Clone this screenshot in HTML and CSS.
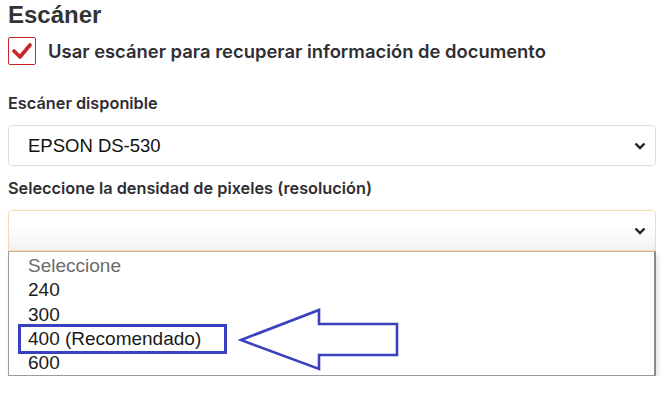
FILE: index.html
```html
<!DOCTYPE html>
<html lang="es">
<head>
    <meta charset="UTF-8">
    <meta name="viewport" content="width=device-width, initial-scale=1.0">
    <title>Escáner</title>
    <link rel="stylesheet" href="styles.css">
</head>
<body>
    <div class="page">
        <h2 class="title">Escáner</h2>

        <div class="check-row">
            <span class="checkbox">
                <svg width="20" height="16" viewBox="0 0 20 16">
                    <path d="M2 8 L8 14 L18 2" fill="none" stroke="#c62828" stroke-width="3.6" stroke-linecap="round" stroke-linejoin="round"/>
                </svg>
            </span>
            <span class="check-label">Usar escáner para recuperar información de documento</span>
        </div>

        <label class="field-label">Escáner disponible</label>
        <div class="select">
            <span class="select-value">EPSON DS-530</span>
            <svg class="chevron" width="12" height="8" viewBox="0 0 12 8">
                <path d="M1.5 1.5 L6 6 L10.5 1.5" fill="none" stroke="#222" stroke-width="2.4"/>
            </svg>
        </div>

        <label class="field-label second">Seleccione la densidad de pixeles (resolución)</label>
        <div class="dropdown">
            <div class="select focused">
                <span class="select-value"></span>
                <svg class="chevron" width="12" height="8" viewBox="0 0 12 8">
                    <path d="M1.5 1.5 L6 6 L10.5 1.5" fill="none" stroke="#222" stroke-width="2.4"/>
                </svg>
            </div>
            <ul class="options">
                <li class="placeholder">Seleccione</li>
                <li>240</li>
                <li>300</li>
                <li class="marked">400 (Recomendado)</li>
                <li>600</li>
            </ul>

            <!-- annotation arrow -->
            <svg class="arrow" width="164" height="64" viewBox="0 0 164 64">
                <path d="M3 32 L81 2 L81 16 L159 16 L159 47 L81 47 L81 61 Z" fill="none" stroke="#3b40c0" stroke-width="2.6" stroke-linejoin="miter"/>
            </svg>
        </div>
    </div>
</body>
</html>
```

FILE: styles.css
```css
:root {
    --font-color: #2e2e33;
    --border-color: #dedede;
    --accent: #c62828;
    --mark: #3b40c0;
}

body {
    margin: 0;
    background-color: #fff;
    color: var(--font-color);
    font-family: Inter, "Liberation Sans", sans-serif;
}

.page {
    display: flex;
    flex-direction: column;
    padding: 0 14px 0 8px;
}

.title {
    font-family: "Liberation Sans", Arial, sans-serif;
    font-size: 24px;
    font-weight: 700;
    color: #333;
    margin: 0;
    line-height: 30px;
}

.check-row {
    display: flex;
    align-items: center;
    gap: 12px;
    margin-top: 7px;
}

.checkbox {
    width: 26px;
    height: 26px;
    border: 1px solid var(--accent);
    border-radius: 2px;
    display: flex;
    align-items: center;
    justify-content: center;
}

.check-label {
    font-size: 18.4px;
    font-weight: 600;
    color: var(--font-color);
}

.field-label {
    font-size: 16.3px;
    font-weight: 600;
    color: var(--font-color);
    margin-top: 28px;
    line-height: 20px;
}

.field-label.second {
    margin-top: 12px;
}

.select {
    margin-top: 12px;
    height: 39px;
    border: 1px solid var(--border-color);
    border-radius: 4px;
    display: flex;
    align-items: center;
    justify-content: space-between;
    padding: 0 9px 0 19px;
    background-color: #fff;
}

.select-value {
    font-family: "Liberation Sans", Arial, sans-serif;
    font-size: 18.5px;
    color: #111;
}

.select.focused {
    border-color: #f3dcb0;
    border-radius: 4px 4px 0 0;
    background: linear-gradient(#fff 40%, #f2f2f2);
}

.dropdown {
    position: relative;
}

.options {
    list-style: none;
    margin: 0;
    padding: 2px 0 0 0;
    border: 1px solid #9a9a9a;
    border-top-color: #c9b792;
    border-right: 2px solid #8a8a8a;
    box-shadow: 2px 3px 5px rgba(0, 0, 0, 0.12);
    background-color: #fff;
}

.options li {
    font-family: "Liberation Sans", Arial, sans-serif;
    font-size: 19px;
    line-height: 24.25px;
    color: #1a1a1a;
    padding-left: 19px;
}

.options li.placeholder {
    color: #6b6b6b;
}

.options li.marked {
    width: 196px;
    margin-left: 12px;
    padding-left: 7px;
    outline: 3px solid var(--mark);
    outline-offset: 0;
}

.arrow {
    position: absolute;
    left: 230px;
    top: 110px;
}
```
